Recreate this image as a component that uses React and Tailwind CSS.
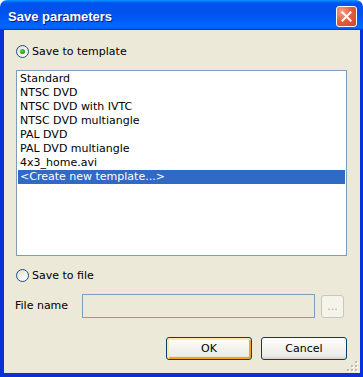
import React from "react";

function Radio({ checked }) {
  return (
    <span className="w-[13px] h-[13px] rounded-full border border-[#1C5180] bg-[linear-gradient(135deg,#DCD9D0_0%,#F4F3EE_55%,#FFFFFF_100%)] flex items-center justify-center shrink-0">
      {checked && (
        <span className="w-[5px] h-[5px] rounded-full bg-[radial-gradient(circle_at_40%_40%,#5FD35F_0%,#21A121_60%,#1A8A1A_100%)]" />
      )}
    </span>
  );
}

function Grip() {
  const dots = [
    [8, 0],
    [4, 4],
    [8, 4],
    [0, 8],
    [4, 8],
    [8, 8],
  ];
  return (
    <svg width="12" height="12" viewBox="0 0 12 12" className="block">
      {dots.map(([x, y], i) => (
        <g key={i}>
          <rect x={x + 1} y={y + 1} width="2" height="2" fill="#FFFFFF" />
          <rect x={x} y={y} width="2" height="2" fill="#BEBAA9" />
        </g>
      ))}
    </svg>
  );
}

export default function App() {
  const items = [
    "Standard",
    "NTSC DVD",
    "NTSC DVD with IVTC",
    "NTSC DVD multiangle",
    "PAL DVD",
    "PAL DVD multiangle",
    "4x3_home.avi",
    "<Create new template...>",
  ];
  return (
    <div className="w-[363px] h-[377px] flex flex-col overflow-hidden font-['DejaVu_Sans',sans-serif] text-[11px] text-black bg-white">
      {/* Title bar */}
      <div className="h-[30px] shrink-0 rounded-t-[7px] flex items-start justify-between pl-[8px] pr-[6px] pt-[6px] bg-[linear-gradient(180deg,#0997FF_0%,#0053EE_10%,#0050EE_40%,#0066FF_86%,#0066FF_92%,#005BFF_95%,#003DD7_97%,#003DD7_100%)]">
        <span className="mt-[3px] text-white font-bold text-[13px] leading-[15px] font-['Liberation_Sans',sans-serif] [text-shadow:1px_1px_0_#0A1883]">
          Save parameters
        </span>
        <span className="w-[21px] h-[21px] rounded-[3px] border border-white bg-[radial-gradient(circle_at_25%_25%,#F3A48C_0%,#E5603F_45%,#CC4424_100%)] flex items-center justify-center">
          <svg width="11" height="11" viewBox="0 0 11 11">
            <path d="M1.5 1.5 L9.5 9.5 M9.5 1.5 L1.5 9.5" stroke="#FFFFFF" strokeWidth="2" strokeLinecap="square" />
          </svg>
        </span>
      </div>

      {/* Body */}
      <div className="relative flex-1 flex flex-col bg-[#ECE9D8] border-l-[4px] border-r-[3px] border-b-[4px] border-[#0831D9] pl-[12px] pr-[13px] pt-[15px]">
        <div className="flex items-center gap-[3px] h-[13px]">
          <Radio checked />
          <span className="leading-[13px]">Save to template</span>
        </div>

        <div className="mt-[12px] h-[186px] border border-[#7F9DB9] bg-white p-[1px]">
          {items.map((t, i) => {
            const sel = i === items.length - 1;
            return (
              <div
                key={i}
                className={
                  "h-[14px] leading-[14px] pl-[2px] whitespace-nowrap " +
                  (sel ? "bg-[#316AC5] text-white" : "")
                }
              >
                {t}
              </div>
            );
          })}
        </div>

        <div className="mt-[13px] flex items-center gap-[3px] h-[13px]">
          <Radio />
          <span className="leading-[13px]">Save to file</span>
        </div>

        <div className="mt-[12px] flex items-center h-[24px]">
          <span className="w-[67px] -ml-[1px] pl-0">File name</span>
          <div className="w-[233px] h-[24px] border border-[#7F9DB9] bg-[#ECE9D8]" />
          <div className="ml-[6px] mt-[1px] w-[23px] h-[23px] rounded-[3px] border border-[#C9C7BA] bg-[#F5F4EA] text-[#ACA899] flex items-center justify-center leading-none pb-[1px]">
            ...
          </div>
        </div>

        <div className="mt-[19px] flex justify-end gap-[9px]">
          <button className="w-[86px] h-[23px] rounded-[3px] border border-[#003C74] bg-[linear-gradient(180deg,#FFFFFF_0%,#F3F2EC_50%,#ECEBE6_85%,#D6D0C5_100%)] shadow-[inset_1px_1px_0_1px_#FFE8A6,inset_-1px_-1px_0_1px_#EFA424] flex items-center justify-center leading-none">
            OK
          </button>
          <button className="w-[86px] h-[23px] rounded-[3px] border border-[#003C74] bg-[linear-gradient(180deg,#FFFFFF_0%,#F3F2EC_50%,#ECEBE6_85%,#D6D0C5_100%)] flex items-center justify-center leading-none">
            Cancel
          </button>
        </div>

        <div className="absolute right-[1px] bottom-0">
          <Grip />
        </div>
      </div>
    </div>
  );
}
